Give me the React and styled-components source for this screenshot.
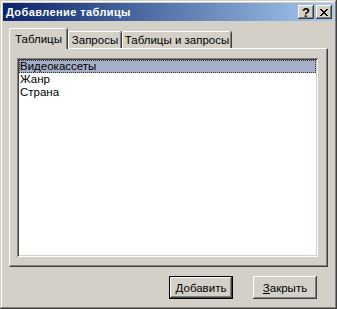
import React, { useState } from 'react'
import styled, { createGlobalStyle } from 'styled-components'

const GlobalStyle = createGlobalStyle`
  html, body {
    margin: 0;
    padding: 0;
    background: #d4d0c8;
  }
  * {
    box-sizing: border-box;
  }
`

const Window = styled.div`
  width: 337px;
  height: 309px;
  padding: 3px;
  background: #d4d0c8;
  font-family: 'Liberation Sans', Arial, sans-serif;
  font-size: 11px;
  color: #000;
  display: flex;
  flex-direction: column;
  box-shadow: inset -1px -1px #404040, inset 1px 1px #d4d0c8, inset -2px -2px #808080,
    inset 2px 2px #fff;
`

const TitleBar = styled.div`
  height: 18px;
  display: flex;
  align-items: center;
  padding: 0 2px 0 3px;
  background: linear-gradient(to right, #0a246a, #a6caf0);
  color: #fff;
  font-weight: bold;
  font-size: 11px;
`

const Title = styled.span`
  flex: 1;
  letter-spacing: 0.4px;
`

const CaptionButton = styled.button`
  width: 16px;
  height: 14px;
  padding: 0;
  margin-left: ${p => (p.$gap ? '2px' : '0')};
  border: none;
  background: #d4d0c8;
  display: flex;
  align-items: center;
  justify-content: center;
  font-family: 'Liberation Sans', Arial, sans-serif;
  font-weight: bold;
  font-size: 13px;
  line-height: 1;
  color: #000;
  box-shadow: inset -1px -1px #404040, inset 1px 1px #fff, inset -2px -2px #808080,
    inset 2px 2px #d4d0c8;
`

const Body = styled.div`
  flex: 1;
  display: flex;
  flex-direction: column;
  padding: 7px 6px 0 6px;
`

const TabStrip = styled.div`
  display: flex;
  align-items: flex-end;
  height: 20px;
  position: relative;
  z-index: 1;
`

const Tab = styled.div`
  width: ${p => p.$width}px;
  height: ${p => (p.$active ? '21px' : '17px')};
  margin-bottom: ${p => (p.$active ? '-1px' : '0')};
  padding-top: ${p => (p.$active ? '3px' : '1px')};
  margin-left: ${p => (p.$active || p.$first ? '0' : '1px')};
  background: #d4d0c8;
  border-top: 1px solid #fff;
  border-left: 1px solid #fff;
  box-shadow: inset -1px 0 #808080, 1px 0 #404040;
  border-radius: 2px 2px 0 0;
  text-align: center;
  white-space: nowrap;
  cursor: default;
  line-height: 14px;
  font-size: 11.5px;
`

const Panel = styled.div`
  width: 319px;
  height: 219px;
  padding: 9px 9px 9px 7px;
  background: #d4d0c8;
  border-top: 1px solid #fff;
  border-left: 1px solid #fff;
  border-right: 1px solid #404040;
  border-bottom: 1px solid #404040;
  box-shadow: inset -1px -1px #808080;
`

const ListBox = styled.div`
  width: 100%;
  height: 100%;
  background: #fff;
  padding: 2px 2px;
  box-shadow: inset 1px 1px #808080, inset -1px -1px #fff, inset 2px 2px #404040,
    inset -2px -2px #d4d0c8;
`

const Item = styled.div`
  height: 13px;
  line-height: 12px;
  padding-left: 1px;
  font-size: 11.5px;
  white-space: nowrap;
  background: ${p => (p.$selected ? '#a6afc8' : 'transparent')};
  outline: ${p => (p.$selected ? '1px dotted #333' : 'none')};
  outline-offset: -1px;
`

const Footer = styled.div`
  display: flex;
  justify-content: flex-end;
  gap: 20px;
  padding: 9px 11px 0 0;
`

const PushButton = styled.button`
  width: 64px;
  height: 23px;
  padding: 0;
  background: #d4d0c8;
  border: none;
  font-family: 'Liberation Sans', Arial, sans-serif;
  font-size: 11.5px;
  color: #000;
  box-shadow: ${p =>
    p.$default
      ? 'inset 1px 1px #000, inset -1px -1px #000, inset -2px -2px #404040, inset 2px 2px #fff, inset -3px -3px #808080'
      : 'inset -1px -1px #404040, inset 1px 1px #fff, inset -2px -2px #808080, inset 2px 2px #d4d0c8'};
`

const CloseGlyph = () => (
  <svg width='8' height='7' viewBox='0 0 8 7' shapeRendering='crispEdges'>
    <path
      d='M0 0h2v1h-2zM6 0h2v1h-2zM1 1h2v1h-2zM5 1h2v1h-2zM2 2h4v1h-4zM3 3h2v1h-2zM2 4h4v1h-4zM1 5h2v1h-2zM5 5h2v1h-2zM0 6h2v1h-2zM6 6h2v1h-2z'
      fill='#000'
    />
  </svg>
)

const tabs = [
  { label: 'Таблицы', width: 58 },
  { label: 'Запросы', width: 53 },
  { label: 'Таблицы и запросы', width: 109 },
]
const tables = ['Видеокассеты', 'Жанр', 'Страна']

const App = () => {
  const [activeTab, setActiveTab] = useState(0)
  const [selected, setSelected] = useState(0)

  return (
    <>
      <GlobalStyle />
      <Window>
        <TitleBar>
          <Title>Добавление таблицы</Title>
          <CaptionButton>?</CaptionButton>
          <CaptionButton $gap>
            <CloseGlyph />
          </CaptionButton>
        </TitleBar>
        <Body>
          <TabStrip>
            {tabs.map((tab, i) => (
              <Tab
                key={tab.label}
                $width={tab.width}
                $active={i === activeTab}
                $first={i === 0}
                onClick={() => setActiveTab(i)}
              >
                {tab.label}
              </Tab>
            ))}
          </TabStrip>
          <Panel>
            <ListBox>
              {tables.map((name, i) => (
                <Item key={name} $selected={i === selected} onClick={() => setSelected(i)}>
                  {name}
                </Item>
              ))}
            </ListBox>
          </Panel>
          <Footer>
            <PushButton $default>
              <u>Д</u>обавить
            </PushButton>
            <PushButton>
              <u>З</u>акрыть
            </PushButton>
          </Footer>
        </Body>
      </Window>
    </>
  )
}

export default App
